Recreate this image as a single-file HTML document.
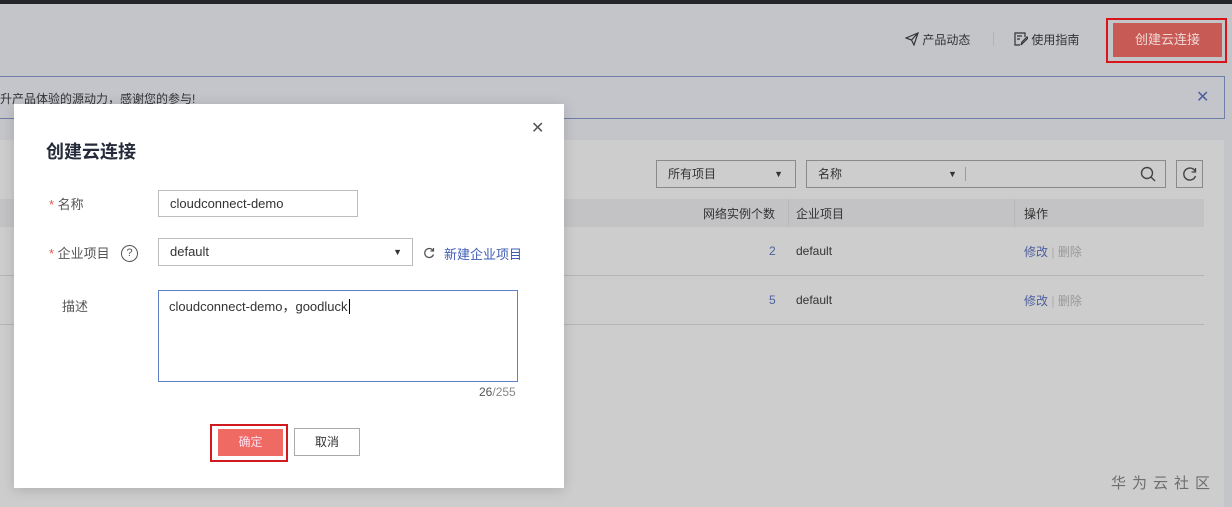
<!DOCTYPE html>
<html><head><meta charset="utf-8"><style>
*{box-sizing:border-box;margin:0;padding:0}
body{width:1232px;height:507px;overflow:hidden;position:relative;background:#c4c5c9;font-family:"Liberation Sans","Noto Sans CJK SC",sans-serif;font-size:12px;color:#333}
.abs{position:absolute}
.topbar{left:0;top:0;width:1232px;height:4px;background:#24262a}
.banner{left:0;top:76px;width:1225px;height:43px;border:1px solid #6f7ea6;border-left:none;background:#c3c5cb}
.card{left:0;top:140px;width:1224px;height:367px;background:#cdcdcd}
.sel{background:#cdcdcd;border:1px solid #8a8a8a;height:28px}
.th{left:0;top:199px;width:1204px;height:28px;background:#c3c3c5}
.line{height:1px;background:#b4b4b4}
.modal{left:14px;top:104px;width:550px;height:384px;background:#fff;box-shadow:0 2px 12px rgba(0,0,0,.15)}
.inp{border:1px solid #bdbdbd;background:#fff;height:27px;font-size:13px;padding-left:11px;line-height:25px;color:#333}
.lbl{font-size:13px;color:#555}
.star{color:#e8574f}
</style></head><body>
<div class="abs topbar"></div>
<div class="abs" style="left:905px;top:31px;font-size:12px;color:#333">
<svg width="14" height="14" viewBox="0 0 14 14" style="vertical-align:-2px"><path d="M1 6 L13 1 L9 13 L6.5 8 Z M6.5 8 L13 1" fill="none" stroke="#333" stroke-width="1.2"/></svg> 产品动态</div>
<div class="abs" style="left:993px;top:32px;width:1px;height:14px;background:#b3b4b8"></div>
<div class="abs" style="left:1014px;top:31px;font-size:12px;color:#333">
<svg width="14" height="14" viewBox="0 0 14 14" style="vertical-align:-2px"><path d="M11 5V1H1v12h5 M3 4h5 M3 7h3 M7 13l1-3 5-5 1 1-5 5z" fill="none" stroke="#333" stroke-width="1.2"/></svg> 使用指南</div>
<div class="abs" style="left:1106px;top:18px;width:121px;height:45px;border:2px solid #d9141a"></div>
<div class="abs" style="left:1113px;top:23px;width:109px;height:34px;background:#c85a55;color:#f0d8d6;font-size:13px;text-align:center;line-height:34px">创建云连接</div>
<div class="abs banner"></div>
<div class="abs" style="left:0;top:90px;font-size:12px;color:#333">升产品体验的源动力，感谢您的参与!</div>
<div class="abs" style="left:1196px;top:90px;color:#4c5fa0;font-size:16px;line-height:16px">✕</div>
<div class="abs card"></div>
<div class="abs sel" style="left:656px;top:160px;width:140px;padding-left:11px;line-height:26px">所有项目<span style="position:absolute;right:12px;font-size:9px">▼</span></div>
<div class="abs sel" style="left:806px;top:160px;width:360px;padding-left:11px;line-height:26px">名称<span style="position:absolute;left:141px;font-size:9px">▼</span><span style="position:absolute;left:158px;top:6px;width:1px;height:14px;background:#999"></span>
<svg class="abs" style="left:333px;top:5px" width="16" height="16" viewBox="0 0 16 16"><circle cx="7" cy="7" r="5.5" fill="none" stroke="#444" stroke-width="1.4"/><path d="M11 11l4 4" stroke="#444" stroke-width="1.4"/></svg></div>
<div class="abs sel" style="left:1176px;top:160px;width:27px">
<svg class="abs" style="left:5px;top:5px" width="16" height="16" viewBox="0 0 16 16"><path d="M13 5A6 6 0 1 0 13.5 10" fill="none" stroke="#444" stroke-width="1.4"/><path d="M13.5 2v4h-4" fill="none" stroke="#444" stroke-width="1.3"/></svg></div>
<div class="abs th"></div>
<div class="abs" style="left:703px;top:205px;font-size:12px">网络实例个数</div>
<div class="abs" style="left:788px;top:199px;width:1px;height:28px;background:#b8b8b8"></div>
<div class="abs" style="left:796px;top:205px">企业项目</div>
<div class="abs" style="left:1014px;top:199px;width:1px;height:28px;background:#b8b8b8"></div>
<div class="abs" style="left:1024px;top:205px">操作</div>
<div class="abs line" style="left:0;top:275px;width:1204px"></div>
<div class="abs line" style="left:0;top:324px;width:1204px"></div>
<div class="abs" style="left:769px;top:244px;color:#4c5fa0">2</div>
<div class="abs" style="left:796px;top:244px">default</div>
<div class="abs" style="left:1024px;top:243px;color:#4c5fa0">修改<span style="color:#aaa"> | </span><span style="color:#999">删除</span></div>
<div class="abs" style="left:769px;top:293px;color:#4c5fa0">5</div>
<div class="abs" style="left:796px;top:293px">default</div>
<div class="abs" style="left:1024px;top:292px;color:#4c5fa0">修改<span style="color:#aaa"> | </span><span style="color:#999">删除</span></div>
<div class="abs" style="left:1111px;top:472px;font-size:15px;color:#6e6e6e;letter-spacing:6px">华为云社区</div>

<div class="abs modal">
<div class="abs" style="left:517px;top:17px;font-size:16px;color:#555;line-height:16px">✕</div>
<div class="abs" style="left:32px;top:34px;font-size:18px;font-weight:bold;color:#252b3a">创建云连接</div>
<div class="abs lbl" style="left:35px;top:90px"><span class="star">*</span> 名称</div>
<div class="abs inp" style="left:144px;top:86px;width:200px">cloudconnect-demo</div>
<div class="abs lbl" style="left:35px;top:139px"><span class="star">*</span> 企业项目</div>
<div class="abs" style="left:107px;top:141px;width:17px;height:17px;border:1.3px solid #555;border-radius:50%;font-size:11px;text-align:center;line-height:15px;color:#555">?</div>
<div class="abs inp" style="left:144px;top:134px;width:255px;height:28px;line-height:26px">default<span style="position:absolute;right:10px;font-size:9px">▼</span></div>
<svg class="abs" style="left:409px;top:143px" width="12" height="12" viewBox="0 0 12 12"><path d="M10 3.5A4.5 4.5 0 1 0 10.5 7.5" fill="none" stroke="#555" stroke-width="1.3"/><path d="M10.5 1v3h-3" fill="none" stroke="#555" stroke-width="1.2"/></svg>
<div class="abs" style="left:430px;top:140px;font-size:13px;color:#3f5cb5">新建企业项目</div>
<div class="abs lbl" style="left:48px;top:192px">描述</div>
<div class="abs" style="left:144px;top:186px;width:360px;height:92px;border:1px solid #5f7fc6;font-size:13px;padding:5px 10px;color:#333">cloudconnect-demo，goodluck<span style="border-left:1px solid #000;margin-left:1px"></span></div>
<div class="abs" style="left:465px;top:281px;font-size:12px;color:#555">26<span style="color:#888">/255</span></div>
<div class="abs" style="left:196px;top:320px;width:78px;height:38px;border:2px solid #d11a1f"></div>
<div class="abs" style="left:204px;top:325px;width:65px;height:27px;background:#ee6a63;color:#fde;font-size:12px;text-align:center;line-height:27px">确定</div>
<div class="abs" style="left:280px;top:324px;width:66px;height:28px;border:1px solid #aaa;text-align:center;line-height:26px;font-size:12px">取消</div>
</div>
</body></html>
